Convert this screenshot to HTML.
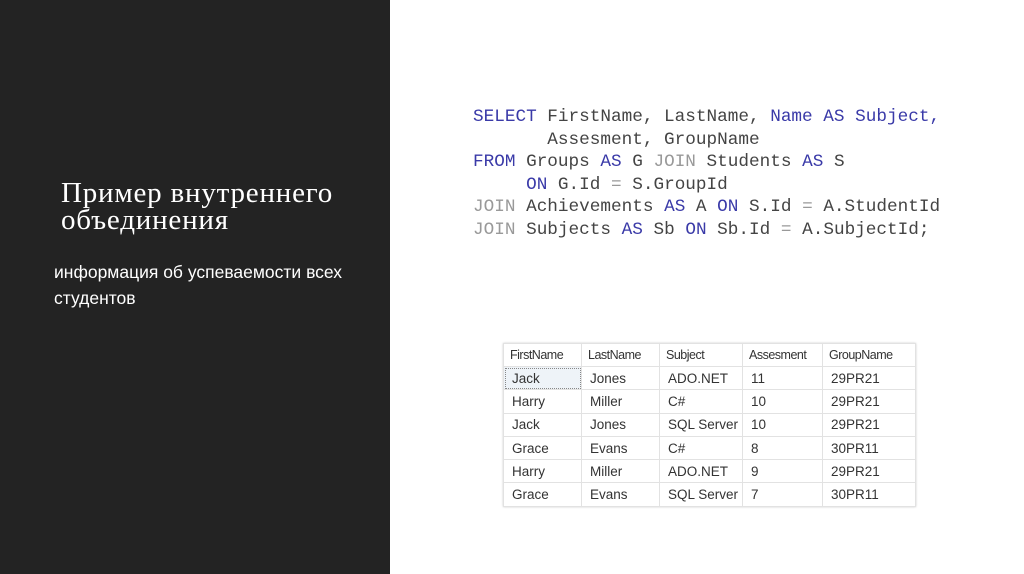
<!DOCTYPE html>
<html><head><meta charset="utf-8"><style>
html,body{margin:0;padding:0}
body{width:1024px;height:574px;position:relative;background:#fff;overflow:hidden}
.left{position:absolute;left:0;top:0;width:390px;height:574px;background:#232323}
.title{position:absolute;left:61px;top:180px;color:#fff;font-family:"Liberation Serif","Noto Serif CJK SC",serif;font-size:29px;line-height:27px;letter-spacing:0.8px}
.sub{position:absolute;left:54px;top:259px;color:#fff;font-family:"Liberation Sans",sans-serif;font-size:17.5px;line-height:26px}
pre{position:absolute;left:473px;top:106px;margin:0;font-family:"Liberation Mono",monospace;font-size:17.7px;line-height:22.5px;color:#444}
.k{color:#3a3aa8}.g{color:#999}
table{position:absolute;left:503px;top:343px;border-collapse:collapse;font-family:"Liberation Sans",sans-serif;font-size:13.5px;color:#333;border:1px solid #bbb;box-shadow:0 0 2px #ccc}
td{border:1px solid #e2e2e2;height:23.3px;padding:0 0 0 8px;box-sizing:border-box}
tr.h td{font-size:12.5px;letter-spacing:-0.5px;padding-left:6px;height:23px}
</style></head><body>
<div class="left"></div>
<div class="title">Пример внутреннего<br>объединения</div>
<div class="sub">информация об успеваемости всех<br>студентов</div>
<pre><span class="k">SELECT</span> FirstName, LastName, <span class="k">Name AS</span> <span class="k">Subject,</span>
       Assesment, GroupName
<span class="k">FROM</span> Groups <span class="k">AS</span> G <span class="g">JOIN</span> Students <span class="k">AS</span> S
     <span class="k">ON</span> G.Id <span class="g">=</span> S.GroupId
<span class="g">JOIN</span> Achievements <span class="k">AS</span> A <span class="k">ON</span> S.Id <span class="g">=</span> A.StudentId
<span class="g">JOIN</span> Subjects <span class="k">AS</span> Sb <span class="k">ON</span> Sb.Id <span class="g">=</span> A.SubjectId;</pre>
<table>
<colgroup><col style="width:78px"><col style="width:78px"><col style="width:83px"><col style="width:80px"><col style="width:93px"></colgroup>
<tr class="h"><td>FirstName</td><td>LastName</td><td>Subject</td><td>Assesment</td><td>GroupName</td></tr>
<tr><td style="outline:1px dotted #888;outline-offset:-2px;background:#eef3f8">Jack</td><td>Jones</td><td>ADO.NET</td><td>11</td><td>29PR21</td></tr>
<tr><td>Harry</td><td>Miller</td><td>C#</td><td>10</td><td>29PR21</td></tr>
<tr><td>Jack</td><td>Jones</td><td>SQL Server</td><td>10</td><td>29PR21</td></tr>
<tr><td>Grace</td><td>Evans</td><td>C#</td><td>8</td><td>30PR11</td></tr>
<tr><td>Harry</td><td>Miller</td><td>ADO.NET</td><td>9</td><td>29PR21</td></tr>
<tr><td>Grace</td><td>Evans</td><td>SQL Server</td><td>7</td><td>30PR11</td></tr>
</table>
</body></html>
